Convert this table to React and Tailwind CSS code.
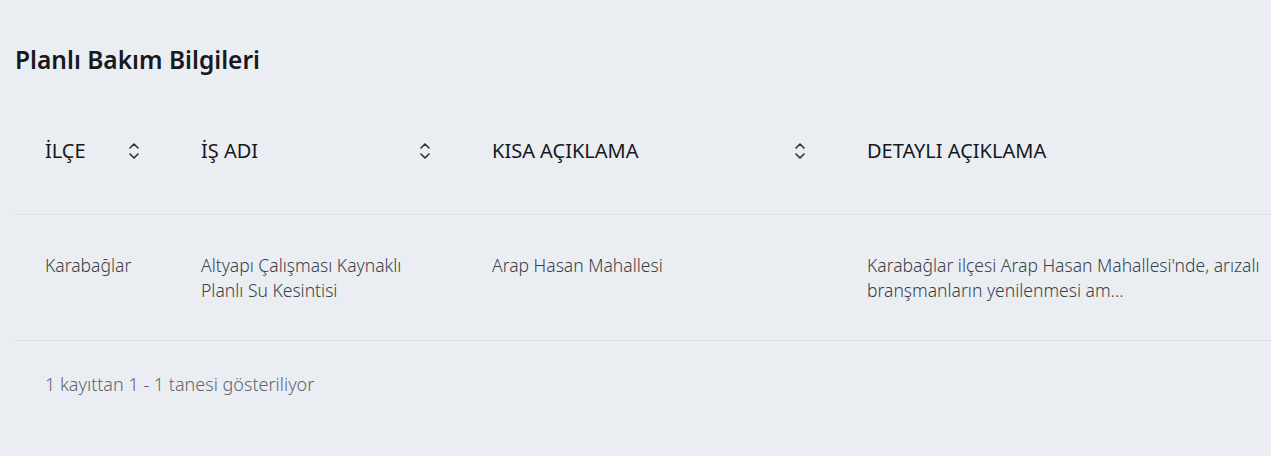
const columns = [
  { key: 'ilce', label: 'İLÇE', width: 'w-[156px]', sortable: true },
  { key: 'is', label: 'İŞ ADI', width: 'w-[291px]', sortable: true },
  { key: 'kisa', label: 'KISA AÇIKLAMA', width: 'w-[375px]', sortable: true },
  { key: 'detay', label: 'DETAYLI AÇIKLAMA', width: 'w-[460px]', sortable: false },
];

const rows = [
  {
    ilce: ['Karabağlar'],
    is: ['Altyapı Çalışması Kaynaklı', 'Planlı Su Kesintisi'],
    kisa: ['Arap Hasan Mahallesi'],
    detay: ["Karabağlar ilçesi Arap Hasan Mahallesi'nde, arızalı", 'branşmanların yenilenmesi am...'],
  },
];

function SortIcon() {
  return (
    <svg width="14" height="22" viewBox="0 0 14 22" fill="none" stroke="#2b2f36" strokeWidth="1.6" strokeLinecap="round" strokeLinejoin="round">
      <path d="M3 8l4-4 4 4" />
      <path d="M3 14l4 4 4-4" />
    </svg>
  );
}

export default function App() {
  return (
    <div className="w-[1271px] h-[456px] overflow-hidden bg-[#eaeef3] pl-[15px] pt-[44px]" style={{ fontFamily: '"Noto Sans", sans-serif' }}>
      <h2 className="text-[24.5px] leading-[32px] font-semibold text-[#16191d]">Planlı Bakım Bilgileri</h2>

      <div className="mt-[24px] w-[1400px]">
        <div className="flex h-[115px] border-b border-[#dcdfe3]">
          {columns.map((c) => (
            <div key={c.key} className={`${c.width} shrink-0 flex items-center justify-between px-[30px] pb-[12px]`}>
              <span className="text-[20px] leading-[28px] font-normal text-[#15181c]">{c.label}</span>
              {c.sortable && <SortIcon />}
            </div>
          ))}
        </div>

        {rows.map((r, i) => (
          <div key={i} className="flex h-[126px] border-b border-[#dcdfe3] pt-[38px]">
            {columns.map((c) => (
              <div key={c.key} className={`${c.width} shrink-0 px-[30px] text-[17.5px] leading-[25px] font-light text-[#3b4047]`}>
                {r[c.key].map((line) => (
                  <div key={line} className="whitespace-nowrap">{line}</div>
                ))}
              </div>
            ))}
          </div>
        ))}

        <div className="pl-[30px] pt-[31px] text-[18px] leading-[25px] font-light text-[#5f656d]">1 kayıttan 1 - 1 tanesi gösteriliyor</div>
      </div>
    </div>
  );
}
